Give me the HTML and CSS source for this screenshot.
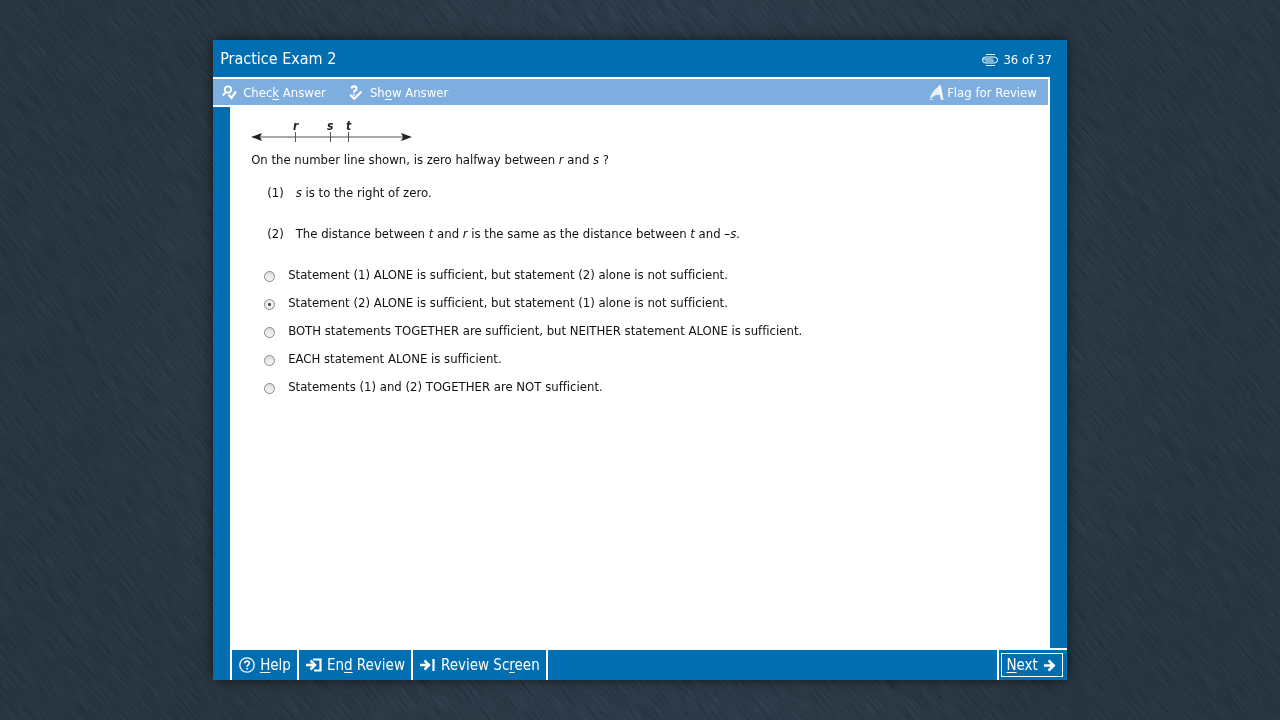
FILE: index.html
```html
<!DOCTYPE html>
<html lang="en">
<head>
<meta charset="utf-8">
<title>Practice Exam 2</title>
<link rel="stylesheet" href="styles.css">
</head>
<body>
<svg class="backdrop" aria-hidden="true">
  <filter id="brushed" x="0" y="0" width="100%" height="100%" color-interpolation-filters="sRGB">
    <feTurbulence type="fractalNoise" baseFrequency="0.03 0.7" numOctaves="3" seed="8"/>
    <feColorMatrix values="0 0 0 0 0.06  0 0 0 0 0.1  0 0 0 0 0.14  0.6 0 0 0 -0.1"/>
  </filter>
  <g transform="rotate(50 640 360)"><rect x="-400" y="-600" width="2100" height="1900" filter="url(#brushed)"/></g>
</svg>
<main class="window">
  <header class="titlebar">
    <h1 class="title">Practice Exam 2</h1>
    <div class="progress">
      <svg class="progress-icon" viewBox="0 0 16 12"><path d="M4 .5h9M4 11.500h9" stroke-width="1.2"/><rect x=".5" y="3" width="15" height="6" rx="3"/><path d="M1 5h10M3 7h9"/></svg>
      <span>36 of 37</span>
    </div>
  </header>
  <nav class="toolbar">
    <button class="tool" type="button">
      <svg class="tool-icon" viewBox="0 0 16 16"><circle cx="6" cy="4.500" r="3.200" stroke-width="1.800"/><path d="M4 7 .8 10.500" stroke-width="2"/><path d="M6.500 9.500l3 3.500L14 6.500" stroke-width="2.200"/></svg>
      <span>Chec<u>k</u> Answer</span>
    </button>
    <button class="tool" type="button">
      <svg class="tool-icon" viewBox="0 0 16 16"><path d="M2.400 3.500C3 .6 7.500.6 7.500 3.400c0 2-2.600 2-2.600 4.400M4.900 9.300v1.300M1 9.700l4.300 4L12.500 6.500" stroke-width="2.200"/></svg>
      <span>Sh<u>o</u>w Answer</span>
    </button>
    <button class="tool flag" type="button">
      <svg class="tool-icon" viewBox="0 0 16 16"><path d="M1 13C3 11.500 3 5 10.500 2l2.200 9C9 9 6 9.500 2.500 13.500z" fill="#fff" fill-opacity=".7" stroke="none"/><path d="M0 14.500h4M12 14.500h3" stroke-opacity=".6"/><path d="m10.500 .5 2.500 13.500" stroke-width="2.500"/><path d="M1 13C3 11.500 3 5 10.500 2M5 10l4-6M8 10l3-4"/></svg>
      <span>Flag for Review</span>
    </button>
  </nav>
  <section class="content">
    <svg class="number-line" viewBox="0 0 162 26" role="img" aria-label="Number line with points r, s and t">
      <path d="M6 18h150M44.500 13v10M79.500 13v10M97.500 13v10" fill="none" stroke="#555"/>
      <path d="m0 18 11-4-2 4 2 4zM161 18l-11-4 2 4-2 4z" fill="#222"/>
      <text x="42" y="11">r</text><text x="76" y="11">s</text><text x="95" y="11">t</text>
    </svg>
    <p class="question">On the number line shown, is zero halfway between <i>r</i> and <i>s</i> ?</p>
    <div class="statements">
      <div class="statement"><span>(1)</span><span><i>s</i> is to the right of zero.</span></div>
      <div class="statement"><span>(2)</span><span>The distance between <i>t</i> and <i>r</i> is the same as the distance between <i>t</i> and <i>–s</i>.</span></div>
    </div>
    <form class="choices">
      <label class="choice"><input type="radio" name="answer"><span>Statement (1) ALONE is sufficient, but statement (2) alone is not sufficient.</span></label>
      <label class="choice"><input type="radio" name="answer" checked><span>Statement (2) ALONE is sufficient, but statement (1) alone is not sufficient.</span></label>
      <label class="choice"><input type="radio" name="answer"><span>BOTH statements TOGETHER are sufficient, but NEITHER statement ALONE is sufficient.</span></label>
      <label class="choice"><input type="radio" name="answer"><span>EACH statement ALONE is sufficient.</span></label>
      <label class="choice"><input type="radio" name="answer"><span>Statements (1) and (2) TOGETHER are NOT sufficient.</span></label>
    </form>
  </section>
  <footer class="footer">
    <button class="action" type="button">
      <svg class="action-icon" viewBox="0 0 16 16"><circle cx="8" cy="8" r="7.2" stroke-width="1.3"/><path d="M5.700 6.300c.2-3 4.800-2.800 4.600 0C10.200 7.900 8 7.800 8 9.800M8 11v1.500" stroke-width="1.7"/></svg>
      <span><u>H</u>elp</span>
    </button>
    <button class="action" type="button">
      <svg class="action-icon" viewBox="0 0 16 16"><path d="M0 8h9M4.500 3.500 9 8l-4.500 4.500" stroke-width="2.500"/><path d="M7 2.500h7.500v11H8" stroke-width="2.200"/></svg>
      <span>En<u>d</u> Review</span>
    </button>
    <button class="action" type="button">
      <svg class="action-icon" viewBox="0 0 16 16"><path d="M0 8h9M4.500 3.500 9 8l-4.500 4.500" stroke-width="2.500"/><path d="M13.500 2v12" stroke-width="2.200"/></svg>
      <span>Review Sc<u>r</u>een</span>
    </button>
    <div class="next-cell">
      <button class="next" type="button">
        <span><u>N</u>ext</span>
        <svg class="next-icon" viewBox="0 0 14 14"><path d="M1 7h11M6 1.500 11.500 7 6 12.500" stroke-width="2.800"/></svg>
      </button>
    </div>
  </footer>
</main>
</body>
</html>
```
FILE: styles.css
```css
* { box-sizing: border-box; }
body {
  margin: 0;
  min-height: 100vh;
  padding: 40px 0;
  display: flex;
  justify-content: center;
  background: radial-gradient(circle, #3c4f63, #2f3d48 75%);
  font-family: "DejaVu Sans Condensed", "DejaVu Sans", "Noto Sans", sans-serif;
  font-stretch: condensed;
  font-variant-ligatures: none;
  font-size: 13px;
  line-height: 20px;
  color: #111;
}
.backdrop { position: fixed; inset: 0; width: 100%; height: 100%; z-index: -1; }
.window {
  width: 66.7%;
  display: flex;
  flex-direction: column;
  background: #006eb0;
  box-shadow: 0 0 12px rgba(0, 0, 0, .6);
}
.titlebar {
  height: 37px;
  padding: 0 15px 0 7px;
  display: flex;
  align-items: center;
  justify-content: space-between;
  color: #fff;
}
.title { margin: 0; font-size: 16px; font-weight: 400; }
.progress { display: flex; align-items: center; gap: 5px; padding-top: 3px; }
svg { flex: none; }
.progress-icon, .tool-icon, .action-icon, .next-icon { fill: none; stroke: #fff; }
.progress-icon { width: 16px; height: 12px; }
.toolbar {
  height: 30px;
  margin-right: 17px;
  padding: 2px 11px 0 9px;
  display: flex;
  align-items: center;
  gap: 23px;
  background: #7eaee0;
  border: 2px solid #fff;
  border-left: 0;
}
button {
  border: 0;
  padding: 0;
  background: none;
  color: #fff;
  font: inherit;
  display: flex;
  align-items: center;
  cursor: pointer;
}
u { text-underline-offset: 2px; }
.tool { gap: 5px; }
.tool-icon { width: 16px; height: 16px; }
.flag { margin-left: auto; gap: 2px; }
.content {
  flex: 1;
  margin: 0 17px;
  padding: 12px 21px;
  background: #fff;
}
.number-line { display: block; width: 162px; height: 26px; overflow: visible; }
.number-line text { font-size: 12px; font-style: italic; font-weight: 700; fill: #222; }
.question { margin: 5px 0 13px; }
.statements { padding-left: 16px; display: grid; gap: 21px; }
.statement { display: flex; gap: 12px; }
.choices { margin-top: 17px; padding-left: 13px; }
.choice { display: flex; align-items: center; gap: 13px; min-height: 28px; }
.choice input {
  appearance: none;
  flex: none;
  width: 11px;
  height: 11px;
  margin: 3px 0 0;
  border: 1px solid #888;
  border-radius: 50%;
  background: linear-gradient(#ddd, #f8f8f8);
}
.choice input:checked { background: radial-gradient(circle, #444 1px, #eee 2px); }
.footer {
  height: 32px;
  margin-left: 17px;
  display: flex;
  border-top: 2px solid #fff;
  border-left: 2px solid #fff;
  font-size: 15px;
}
.action { padding: 0 6px 0 7px; gap: 5px; border-right: 2px solid #fff; }
.action-icon { width: 16px; height: 16px; }
.next-cell { margin-left: auto; padding: 3px 4px 3px 2px; border-left: 2px solid #fff; display: flex; }
.next { padding: 0 6px 0 4px; gap: 5px; border: 1px solid #fff; }
.next-icon { width: 13px; height: 13px; }
```
